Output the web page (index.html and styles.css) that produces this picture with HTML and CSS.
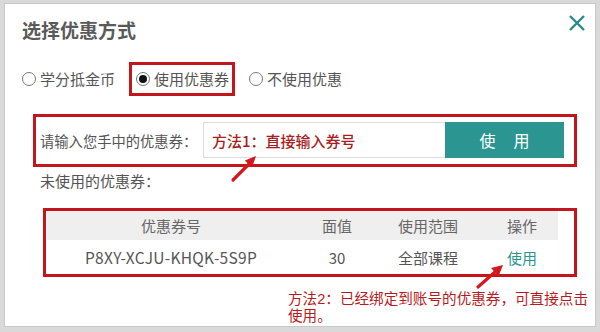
FILE: index.html
```html
<!DOCTYPE html>
<html lang="zh-CN">
<head>
<meta charset="utf-8">
<title>选择优惠方式</title>
<link rel="stylesheet" href="styles.css">
</head>
<body>
<div class="dialog">
  <div class="title">选择优惠方式</div>
  <span class="close" aria-label="关闭">
    <svg width="18" height="16" viewBox="0 0 18 16"><path d="M2 1 L16 15 M16 1 L2 15" stroke="#2a8a87" stroke-width="2.4" fill="none"/></svg>
  </span>
  <div class="radios">
    <label class="opt"><span class="radio"></span><span>学分抵金币</span></label>
    <label class="opt boxed"><span class="radio on"></span><span>使用优惠券</span></label>
    <label class="opt"><span class="radio"></span><span>不使用优惠</span></label>
  </div>
  <div class="redbox entry">
    <span class="lbl">请输入您手中的优惠券：</span>
    <div class="input"><span class="hint">方法1：直接输入券号</span></div>
    <button class="btn"><span>使</span><span>用</span></button>
  </div>
  <div class="unused">未使用的优惠券：</div>
  <div class="redbox tablebox">
    <div class="table">
      <div class="row head">
        <span>优惠券号</span><span>面值</span><span>使用范围</span><span>操作</span>
      </div>
      <div class="row body">
        <span class="code">P8XY-XCJU-KHQK-5S9P</span><span>30</span><span>全部课程</span><span class="use">使用</span>
      </div>
    </div>
  </div>
  <div class="note"><div>方法2：已经绑定到账号的优惠券，可直接点击</div><div>使用。</div></div>
  <svg class="arrow a1" width="40" height="40" viewBox="0 0 40 40">
    <polygon points="31,6 27,17.4 19.8,10.5" fill="#d3191f"/>
    <line x1="8" y1="30" x2="24" y2="14" stroke="#d3191f" stroke-width="3.2" stroke-linecap="round"/>
  </svg>
  <svg class="arrow a2" width="40" height="40" viewBox="0 0 40 40">
    <polygon points="33,7 28.4,18.4 21.1,10.1" fill="#d3191f"/>
    <line x1="8" y1="29" x2="25" y2="14" stroke="#d3191f" stroke-width="3.2" stroke-linecap="round"/>
  </svg>
</div>
</body>
</html>
```
FILE: styles.css
```css
* { box-sizing: border-box; margin: 0; padding: 0; }
html, body { width: 600px; height: 332px; overflow: hidden; }
body {
  background: #d9d9d9;
  font-family: "Noto Sans CJK SC", "Noto Sans", sans-serif;
  color: #555;
}
.dialog {
  position: relative;
  margin: 3px 0 0 4px;
  width: 592px;
  height: 324px;
  background: #fff;
  border: 1px solid #c8c8c8;
}
.title {
  margin-top: 13px;
  padding-left: 17px;
  height: 26px;
  line-height: 26px;
  font-size: 19px;
  font-weight: 700;
  color: #5a5a5a;
}
.close {
  position: absolute;
  top: 11px;
  right: 9px;
  width: 18px;
  height: 16px;
  display: block;
}
.close svg { display: block; }
.radios {
  margin-top: 19px;
  padding-left: 17px;
  height: 34px;
  display: flex;
  align-items: center;
  gap: 14px;
  font-size: 15px;
  line-height: 20px;
  white-space: nowrap;
}
.opt {
  display: flex;
  align-items: center;
  gap: 4px;
  height: 34px;
}
.opt.boxed {
  border: 3px solid #c3161c;
  padding: 0 3px 0 4px;
}
.radio {
  width: 14px;
  height: 14px;
  border: 1px solid #777;
  border-radius: 50%;
  display: flex;
  align-items: center;
  justify-content: center;
  background: #fff;
}
.radio.on::after {
  content: "";
  width: 8px;
  height: 8px;
  border-radius: 50%;
  background: #111;
}
.redbox { border: 3px solid #c3161c; }
.entry {
  margin: 18px 0 0 28px;
  width: 544px;
  height: 53px;
  display: flex;
  align-items: center;
  padding: 0 10px 1px 4px;
}
.lbl {
  font-size: 14.3px;
  width: 163px;
  flex: none;
  white-space: nowrap;
}
.input {
  width: 242px;
  height: 36px;
  border: 1px solid #ddd;
  border-right: none;
  display: flex;
  align-items: center;
  padding-left: 8px;
  white-space: nowrap;
}
.hint {
  color: #a81d22;
  font-size: 15px;
  font-weight: 500;
}
.btn {
  width: 119px;
  height: 36px;
  border: none;
  background: #2b9591;
  color: #fff;
  font-family: inherit;
  font-size: 16px;
  display: flex;
  align-items: center;
  justify-content: center;
  gap: 18px;
}
.unused {
  margin-top: 6px;
  padding-left: 35px;
  height: 16px;
  line-height: 16px;
  font-size: 15px;
}
.tablebox {
  margin: 19px 0 0 38px;
  width: 534px;
  height: 69px;
  padding-left: 1px;
}
.table { width: 511px; font-size: 15px; }
.row {
  display: grid;
  grid-template-columns: 248px 84px 98px 81px;
  text-align: center;
  align-items: center;
  white-space: nowrap;
}
.row.head {
  height: 29px;
  background: #efefef;
  color: #666;
}
.row.body {
  height: 34px;
  color: #555;
}
.code { font-size: 15.5px; letter-spacing: 0.3px; }
.row span:last-child { padding-left: 9px; }
.use { color: #2b9591; }
.note {
  margin: 14px 0 0 283px;
  font-family: "Liberation Sans", "Noto Sans CJK SC", sans-serif;
  font-size: 14.6px;
  line-height: 17px;
  color: #b71b21;
  white-space: nowrap;
}
.arrow { position: absolute; display: block; }
.a1 { left: 220px; top: 146px; }
.a2 { left: 465px; top: 254px; }
```
